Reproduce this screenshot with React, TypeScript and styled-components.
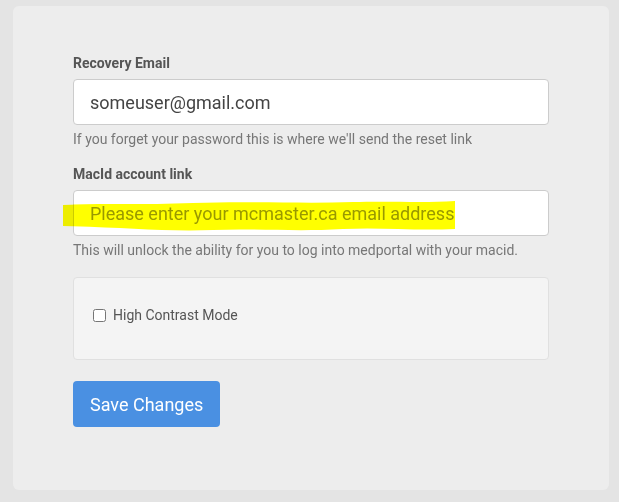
import React from 'react';
import styled, { createGlobalStyle } from 'styled-components';

const GlobalStyle = createGlobalStyle`
  html, body {
    margin: 0;
    padding: 0;
    background: #e4e4e4;
    font-family: Roboto, "Liberation Sans", Arial, sans-serif;
  }
  * { box-sizing: border-box; }
`;

const App: React.FC = () => {
  return (
    <>
      <GlobalStyle />
      <Page>
        <Card>
          <FormGroup>
            <Label htmlFor="recovery">Recovery Email</Label>
            <Input id="recovery" type="email" defaultValue="someuser@gmail.com" />
            <HelpText>If you forget your password this is where we'll send the reset link</HelpText>
          </FormGroup>

          <FormGroup>
            <Label htmlFor="macid">MacId account link</Label>
            <InputWrap>
              <Input id="macid" type="email" placeholder="Please enter your mcmaster.ca email address" />
              <Highlight viewBox="0 0 392 32" width="392" height="32" aria-hidden="true">
                <path
                  d="M0,5 C40,3 80,5 130,3 C190,1 240,4 290,2 C330,1 360,3 392,1 L392,29 C350,31 320,27 280,29 C230,32 190,28 150,30 C100,32 60,27 0,26 Z"
                  fill="#ffff00"
                />
              </Highlight>
            </InputWrap>
            <HelpText>This will unlock the ability for you to log into medportal with your macid.</HelpText>
          </FormGroup>

          <OptionsPanel>
            <CheckRow>
              <Checkbox type="checkbox" />
              High Contrast Mode
            </CheckRow>
          </OptionsPanel>

          <SaveButton type="button">Save Changes</SaveButton>
        </Card>
      </Page>
    </>
  );
};

const Page = styled.div`
  padding: 6px 10px 12px 13px;
`;

const Card = styled.div`
  width: 596px;
  background: #ededed;
  border-radius: 6px;
  padding: 48px 60px 63px;
`;

const FormGroup = styled.div`
  margin-bottom: 16px;
`;

const Label = styled.label`
  display: block;
  font-size: 14px;
  line-height: 18px;
  font-weight: 700;
  color: #555;
  margin-bottom: 7px;
`;

const InputWrap = styled.div`
  position: relative;
`;

const Input = styled.input`
  display: block;
  width: 100%;
  height: 46px;
  padding: 0 16px;
  font-family: Roboto, "Liberation Sans", Arial, sans-serif;
  font-size: 18px;
  color: #444;
  background: #fff;
  border: 1px solid #ccc;
  border-radius: 4px;
  outline: none;

  &::placeholder {
    color: #999;
  }
`;

const Highlight = styled.svg`
  position: absolute;
  left: -10px;
  top: 10px;
  mix-blend-mode: multiply;
  pointer-events: none;
`;

const HelpText = styled.p`
  margin: 4px 0 0;
  font-size: 14px;
  line-height: 20px;
  color: #777;
`;

const OptionsPanel = styled.div`
  margin-top: 17px;
  background: #f4f4f4;
  border: 1px solid #e0e0e0;
  border-radius: 4px;
  padding: 27px 19px 34px;
`;

const CheckRow = styled.label`
  display: flex;
  align-items: center;
  height: 20px;
  font-size: 14px;
  color: #555;
`;

const Checkbox = styled.input`
  width: 13px;
  height: 13px;
  margin: 0 7px 0 0;
`;

const SaveButton = styled.button`
  margin-top: 21px;
  height: 46px;
  padding: 0 17px;
  background: #4a90e2;
  color: #fff;
  border: none;
  border-radius: 4px;
  font-family: Roboto, "Liberation Sans", Arial, sans-serif;
  font-size: 18px;
  cursor: pointer;
`;

export default App;
